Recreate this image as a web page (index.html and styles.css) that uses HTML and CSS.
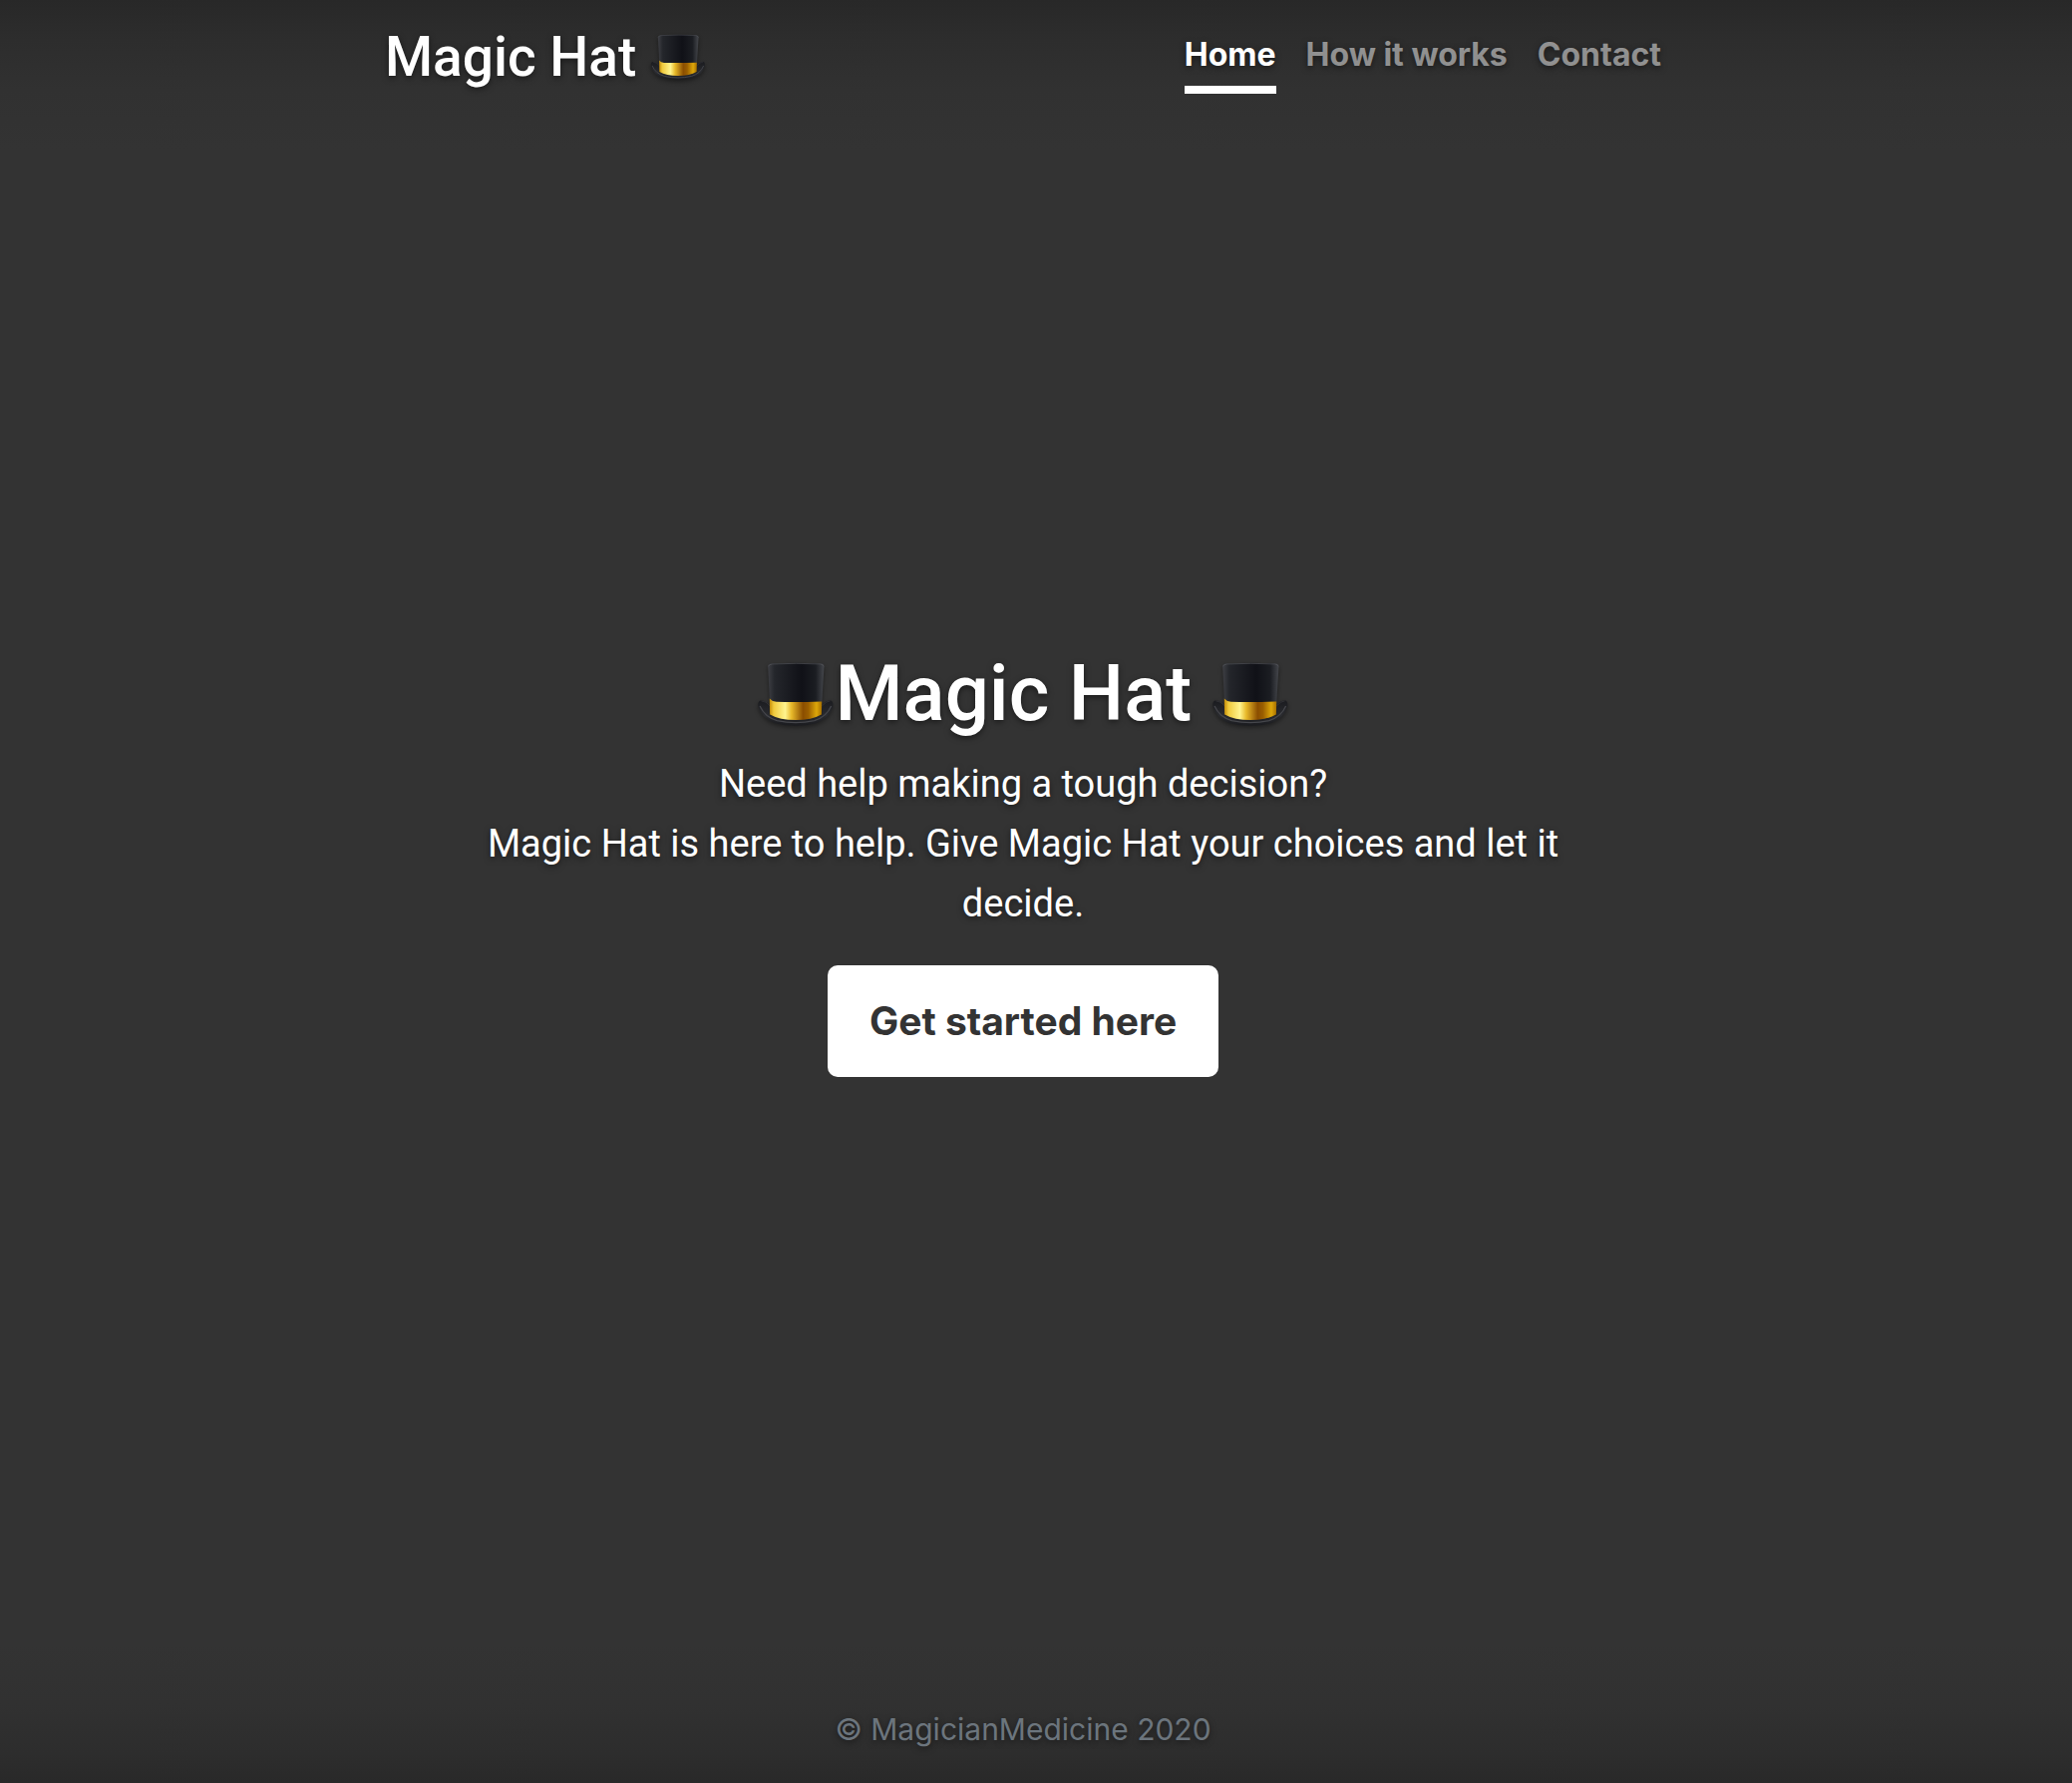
FILE: index.html
```html
<!DOCTYPE html>
<html lang="en">
<head>
<meta charset="utf-8">
<meta name="viewport" content="width=device-width, initial-scale=1">
<title>Magic Hat</title>
<link rel="stylesheet" href="styles.css">
</head>
<body>
<svg class="sprite" aria-hidden="true">
  <defs>
    <linearGradient id="crown" x1="0" x2="1" y1="0" y2="0">
      <stop offset="0" stop-color="#3e3f44"/><stop offset=".12" stop-color="#24262b"/><stop offset=".6" stop-color="#101117"/><stop offset=".85" stop-color="#1b1d22"/><stop offset="1" stop-color="#45474c"/>
    </linearGradient>
    <linearGradient id="band" x1="0" x2="1" y1="0" y2="0">
      <stop offset="0" stop-color="#c18a08"/><stop offset=".08" stop-color="#f0ca3c"/><stop offset=".3" stop-color="#fff48e"/><stop offset=".42" stop-color="#e8b92a"/><stop offset=".64" stop-color="#8b4e00"/><stop offset=".74" stop-color="#9a5e00"/><stop offset=".9" stop-color="#dda70a"/><stop offset="1" stop-color="#a66f00"/>
    </linearGradient>
    <linearGradient id="brim" x1="0" x2="0" y1="0" y2="1">
      <stop offset="0" stop-color="#1a1b1f"/><stop offset=".6" stop-color="#2a2b2f"/><stop offset="1" stop-color="#1a1b1f"/>
    </linearGradient>
    <symbol id="hat" viewBox="14 24 240 204">
      <path fill="url(#brim)" d="M27 142Q14 145 18 163Q30 200 70 213Q134 229 198 213Q238 198 249 163Q252 145 241 142Q228 143 216 156V190H54V156Q38 143 27 142Z"/>
      <path fill="none" stroke="#45464b" stroke-width="4" d="M23 160Q38 194 76 205Q134 218 192 205Q230 193 244 160"/>
      <path fill="none" stroke="#3c3d42" stroke-width="2" d="M27 144Q42 145 54 159M241 144Q229 145 216 159"/>
      <path fill="url(#crown)" d="M48 37Q48 29 60 28Q136 24 212 28Q222 29 222 37L215 152H54Z"/>
      <path fill="none" stroke="#55575c" stroke-width="2" d="M50 37Q50 31 62 30Q136 26 210 30Q220 31 220 37"/>
      <path fill="url(#band)" d="M53 137Q60 146 74 147Q136 149 215 146L214 186Q184 203 134 203Q84 203 54 186Z"/>
    </symbol>
  </defs>
</svg>
<div class="cover">
  <header class="masthead">
    <h3 class="brand">Magic Hat <svg class="hat hat-small" role="img" aria-label="Top hat"><use href="#hat"/></svg></h3>
    <nav class="nav">
      <a class="nav-link active" href="#">Home</a>
      <a class="nav-link" href="#how">How it works</a>
      <a class="nav-link" href="#contact">Contact</a>
    </nav>
  </header>
  <main class="intro">
    <h1 class="title"><svg class="hat hat-large" role="img" aria-label="Top hat"><use href="#hat"/></svg>Magic Hat <svg class="hat hat-large" role="img" aria-label="Top hat"><use href="#hat"/></svg></h1>
    <p class="lead">Need help making a tough decision?<br>Magic Hat is here to help. Give Magic Hat your choices and let it decide.</p>
    <a class="button" href="#start">Get started here</a>
  </main>
  <footer class="footer">© MagicianMedicine 2020</footer>
</div>
</body>
</html>
```
FILE: styles.css
```css
* { box-sizing: border-box; }

body {
  margin: 0;
  min-height: 100vh;
  display: flex;
  padding-right: 26px;
  background-color: #333;
  background-image:
    linear-gradient(to bottom, #282828, #2d2d2d 40px, #313131 90px, #333 150px, transparent 151px),
    linear-gradient(to top, #292929, #2d2d2d 30px, #313131 80px, #333 140px, transparent 141px);
  color: #fff;
  font-family: Inter, "Liberation Sans", sans-serif;
  font-size: 32px;
  line-height: 48px;
  text-shadow: 0 2px 6px rgba(0, 0, 0, .5);
}

.sprite { position: absolute; width: 0; height: 0; }

.cover {
  width: 100%;
  max-width: 1344px;
  margin: 0 auto;
  padding: 24px 32px 30px;
  display: flex;
  flex-direction: column;
  justify-content: space-between;
}

.masthead {
  display: flex;
  justify-content: space-between;
  align-items: flex-start;
}

.brand,
.title,
.lead { font-family: Roboto, "Liberation Sans", sans-serif; }

.brand {
  margin: 0;
  font-size: 55px;
  font-weight: 500;
  line-height: 66px;
}

.hat { filter: drop-shadow(0 2px 2px rgba(0, 0, 0, .4)); }
.hat-small { width: 56px; height: 48px; vertical-align: -6px; }
.hat-large { width: 78px; height: 66px; vertical-align: -8px; }

.nav { display: flex; gap: 30px; }

.nav-link {
  padding: 7px 0;
  border-bottom: 8px solid transparent;
  color: rgba(255, 255, 255, .5);
  font-weight: 700;
  text-decoration: none;
}
.nav-link.active { color: #fff; border-bottom-color: #fff; }

.intro { padding: 0 60px 76px; text-align: center; }

.title {
  margin: 0 0 12px;
  font-size: 78px;
  font-weight: 500;
  line-height: 96px;
}

.lead {
  margin: 0 0 32px;
  font-size: 38px;
  font-weight: 400;
  line-height: 60px;
}

.button {
  display: inline-block;
  padding: 26px 42px;
  border-radius: 10px;
  background: #fff;
  color: #333;
  font-size: 39px;
  font-weight: 700;
  line-height: 60px;
  text-decoration: none;
  text-shadow: none;
}

.footer { color: #6c757d; font-size: 30px; text-align: center; }
```
